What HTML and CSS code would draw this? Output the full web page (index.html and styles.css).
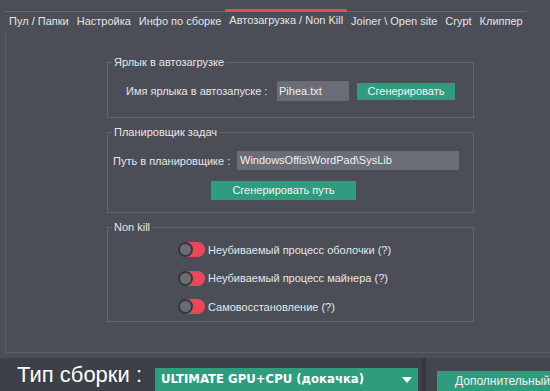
FILE: index.html
```html
<!DOCTYPE html>
<html lang="ru">
<head>
<meta charset="utf-8">
<link rel="stylesheet" href="styles.css">
</head>
<body>
<div class="tabs">
  <div class="tab">Пул / Папки</div>
  <div class="tab">Настройка</div>
  <div class="tab">Инфо по сборке</div>
  <div class="tab active">Автозагрузка / Non Kill</div>
  <div class="tab">Joiner \ Open site</div>
  <div class="tab">Crypt</div>
  <div class="tab">Клиппер</div>
</div>
<div class="panel">
  <fieldset class="group g1">
    <legend>Ярлык в автозагрузке</legend>
    <div class="row r1">
      <span class="label">Имя ярлыка в автозапуске :</span>
      <span class="input in1">Pihea.txt</span>
      <span class="btn b1">Сгенерировать</span>
    </div>
  </fieldset>
  <fieldset class="group g2">
    <legend>Планировщик задач</legend>
    <div class="row r2">
      <span class="label">Путь в планировщике :</span>
      <span class="input in2">WindowsOffis\WordPad\SysLib</span>
    </div>
    <div class="row r3">
      <span class="btn b2">Сгенерировать путь</span>
    </div>
  </fieldset>
  <fieldset class="group g3">
    <legend>Non kill</legend>
    <div class="toggles">
      <div class="trow"><span class="toggle"><span class="knob"></span></span><span>Неубиваемый процесс оболочки (?)</span></div>
      <div class="trow"><span class="toggle"><span class="knob"></span></span><span>Неубиваемый процесс майнера (?)</span></div>
      <div class="trow"><span class="toggle"><span class="knob"></span></span><span>Самовосстановление (?)</span></div>
    </div>
  </fieldset>
</div>
<div class="bottom">
  <div class="left">
    <span class="type">Тип сборки :</span>
    <div class="select">
      <span>ULTIMATE GPU+CPU (докачка)</span>
      <svg class="arrow" width="10" height="6" viewBox="0 0 10 6"><path d="M0 0H10L5 6Z" fill="#fff"/></svg>
    </div>
  </div>
  <div class="divider"></div>
  <div class="right">
    <div class="more">Дополнительный</div>
  </div>
</div>
</body>
</html>
```

FILE: styles.css
```css
* { box-sizing: border-box; }
html, body { margin: 0; padding: 0; }
body {
  width: 550px;
  height: 391px;
  overflow: hidden;
  background: #4b4e57;
  color: #e6e6e8;
  font-family: "Liberation Sans", Arial, sans-serif;
  font-size: 11px;
}
.tabs {
  display: flex;
  margin: 11px 0 0 5px;
  width: 522px;
  height: 19px;
  border-top: 1px solid #666972;
}
.tab {
  padding: 2px 4px 0;
  line-height: 14px;
  font-size: 11px;
  color: #e4e4e6;
  white-space: nowrap;
}
.tab.active {
  margin-top: -3px;
  border-top: 3px solid #df4d5a;
  padding: 1px 4px 0 4px;
}
.panel {
  margin-left: 5px;
  height: 323px;
  border-left: 1px solid #5c5f68;
  border-bottom: 1px solid #5c5f68;
  padding: 25px 0 0 101px;
}
.group {
  margin: 0 0 7px 0;
  padding: 0;
  width: 367px;
  border: 1px solid #62656e;
  min-width: 0;
}
.group legend {
  margin-left: 4px;
  padding: 0 2px;
  line-height: 14px;
  color: #e6e6e8;
}
.g1 { height: 63px; }
.g2 { height: 88px; }
.g3 { height: 102px; }
.row { display: flex; align-items: center; }
.r1 { padding: 12px 0 0 18px; }
.r1 .label { width: 151px; }
.input {
  background: #6a6d75;
  color: #f0f0f0;
  height: 20px;
  line-height: 20px;
  padding-left: 2px;
}
.in1 { width: 72px; }
.btn {
  background: #2f9c7e;
  color: #f4f4f4;
  text-align: center;
  height: 17px;
  line-height: 17px;
}
.b1 { width: 98px; margin-left: 8px; }
.r2 { padding: 12px 0 0 5px; }
.r2 .label { width: 124px; }
.in2 { width: 222px; height: 19px; line-height: 19px; padding-left: 3px; }
.r3 { padding: 11px 0 0 103px; }
.b2 { width: 145px; height: 19px; line-height: 19px; }
.toggles { padding: 8px 0 0 70px; display: flex; flex-direction: column; gap: 13.5px; }
.trow { display: flex; align-items: center; height: 15px; }
.toggle {
  position: relative;
  width: 27px;
  height: 15px;
  background: linear-gradient(90deg, transparent 0 8px, #e8485a 8px);
  border-radius: 8px;
  margin-right: 3px;
  flex: none;
}
.knob {
  position: absolute;
  left: 0;
  top: 0;
  width: 15px;
  height: 15px;
  border-radius: 50%;
  background: #6b6d74;
  border: 2px solid #34363c;
}
.bottom {
  display: flex;
  margin-top: 5px;
  height: 34px;
}
.left {
  width: 432px;
  background: #3e4048;
  display: flex;
  align-items: flex-start;
  padding: 4px 0 0 17px;
}
.type {
  font-size: 22px;
  color: #ffffff;
  line-height: 26px;
  width: 138px;
}
.select {
  margin-top: 6px;
  width: 263px;
  height: 30px;
  background: #2f9c7e;
  color: #ffffff;
  font-weight: bold;
  display: flex;
  justify-content: space-between;
  padding: 4px 6px 0 6px;
  font-family: "DejaVu Sans", sans-serif;
  font-size: 11.7px;
}
.arrow { margin-top: 5px; }
.divider { width: 4px; background: #35373d; }
.right {
  flex: 1;
  background: #44464e;
  padding: 13px 0 0 11px;
}
.more {
  background: #2f9c7e;
  height: 30px;
  color: #f2f2f2;
  font-size: 12px;
  padding: 3px 0 0 18px;
}
```
